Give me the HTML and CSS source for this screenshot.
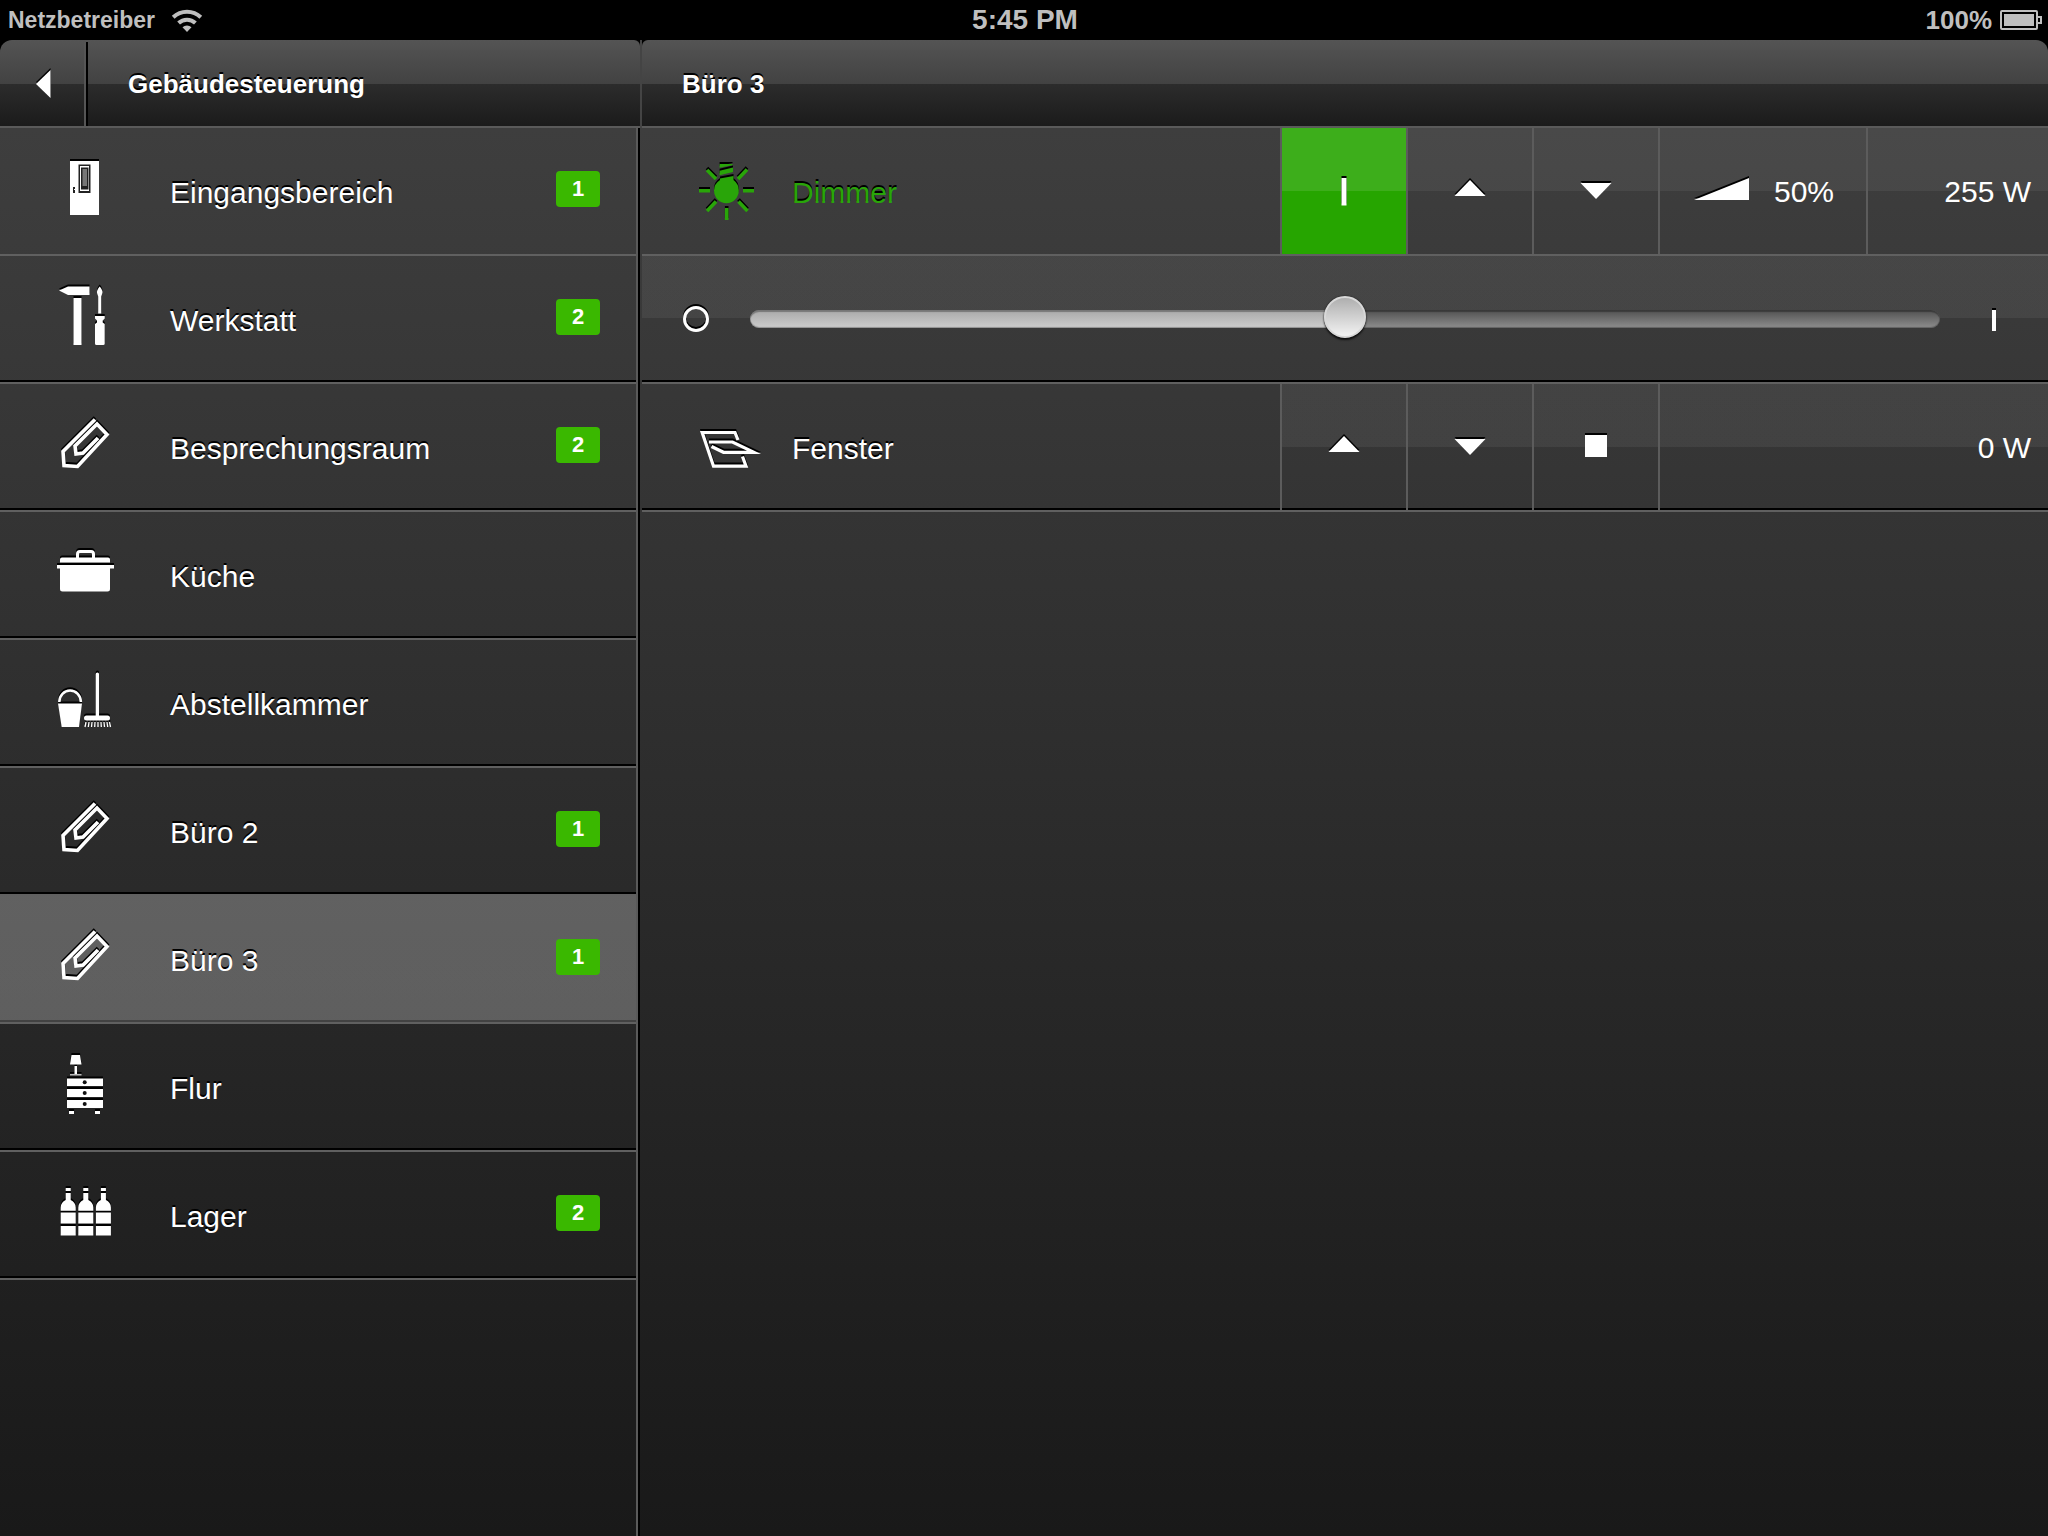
FILE: index.html
```html
<!DOCTYPE html>
<html lang="de">
<head>
<meta charset="utf-8">
<meta name="viewport" content="width=device-width, initial-scale=1">
<title>Gebäudesteuerung</title>
<link rel="stylesheet" href="styles.css">
</head>
<body>
<svg class="sprite" aria-hidden="true">
  <symbol id="clip" viewBox="0 0 72 72">
    <path fill="none" stroke="currentColor" stroke-width="3.600" d="M46 8.500 14 40.500 15 54.500 28.500 55.500 58 23.500 48 13 26 35 27 43 34 42 49 27"/>
  </symbol>
  <symbol id="up" viewBox="0 0 48 48"><path fill="currentColor" d="M8.500 29 24 13 39.500 29z"/></symbol>
  <symbol id="down" viewBox="0 0 48 48"><path fill="currentColor" d="M8.500 16h31L24 32z"/></symbol>
</svg>

<div class="status">
  <div class="status-left">
    <span>Netzbetreiber</span>
    <svg width="32" height="24" viewBox="0 0 32 24" aria-hidden="true">
      <g fill="none" stroke="currentColor" stroke-width="4">
        <path d="M2.200 9.200a20 20 0 0 1 27.600 0"/>
        <path d="M7.600 15a12.200 12.200 0 0 1 16.800 0"/>
      </g>
      <path fill="currentColor" d="M11.500 19.300a6.500 6.500 0 0 1 9 0L16 24z"/>
    </svg>
  </div>
  <time class="status-time">5:45 PM</time>
  <div class="status-right">
    <span>100%</span>
    <svg width="42" height="20" viewBox="0 0 42 20" aria-hidden="true">
      <rect x="1" y="1" width="36" height="18" rx="1" fill="none" stroke="currentColor" stroke-width="2"/>
      <path fill="currentColor" d="M4 4h30v12H4z"/>
      <path fill="none" stroke="currentColor" stroke-width="2" d="M38 7h3v6h-3"/>
    </svg>
  </div>
</div>

<div class="split">
  <aside class="sidebar">
    <div class="bar-frame">
      <header class="bar bar-left">
        <button class="back" type="button" aria-label="Zurück">
          <svg width="16" height="28" viewBox="0 0 16 28"><path fill="currentColor" d="M1 14 15.500 0v28z"/></svg>
        </button>
        <h1 class="bar-title">Gebäudesteuerung</h1>
      </header>
    </div>
    <nav class="rooms" aria-label="Räume">
      <ul class="room-list">
        <li><a class="room" href="#eingang">
          <svg class="icon" viewBox="0 0 72 72">
            <path fill="#fff" d="M21 6h29v54H21z"/>
            <path fill="#222" d="M29.500 9.500h12V38h-12z"/>
            <path fill="#fff" d="M31 11h9v25h-9z"/>
            <path fill="#222" d="M32 12.500h7.500v22H32z"/>
            <path fill="#777" d="M33.500 14h4.500v17h-4.500z"/>
            <path fill="#222" d="M24 32h2v2h-1v1h1v3h-2z"/>
          </svg>
          <span class="name">Eingangsbereich</span><span class="badge">1</span></a></li>
        <li><a class="room" href="#werkstatt">
          <svg class="icon" viewBox="0 0 72 72">
            <path fill="#fff" d="M10 7.500 19 3.500h21.500V12H19zM24.500 15h8v47h-8z"/>
            <path fill="#fff" d="M50.700 3.500c2 2.500 3.500 5 2.500 7l-1 3v17h-3v-17l-1-3c-1-2 .5-4.500 2.500-7zM46 33h9.700v2.500l-2 2v2l2 1.500v19.500q0 1.500-1.500 1.500h-6.700q-1.500 0-1.500-1.500V41l2-1.500v-2l-2-2z"/>
          </svg>
          <span class="name">Werkstatt</span><span class="badge">2</span></a></li>
        <li><a class="room" href="#besprechung">
          <svg class="icon"><use href="#clip"/></svg>
          <span class="name">Besprechungsraum</span><span class="badge">2</span></a></li>
        <li><a class="room" href="#kueche">
          <svg class="icon" viewBox="0 0 72 72">
            <path fill="none" stroke="#fff" stroke-width="3" d="M28.500 19v-4q0-2.500 2.500-2.500h11q2.500 0 2.500 2.500v4"/>
            <path fill="#fff" d="M11 23.500v-3q0-2 2-2h46q2 0 2 2v3zM8 26h57v3.500h-4V50q0 2.500-2.500 2.500h-45Q11 52.500 11 50V29.500H8z"/>
          </svg>
          <span class="name">Küche</span></a></li>
        <li><a class="room" href="#abstellkammer">
          <svg class="icon" viewBox="0 0 72 72">
            <path fill="none" stroke="#fff" stroke-width="2.500" d="M10.300 35a10.800 11.500 0 0 1 21.600 0"/>
            <path fill="#fff" d="M9 36.500h24L30 60H12.700z"/>
            <path fill="#fff" d="M46.700 7q0-1.500 1.700-1.500T50 7v41.500h8.500q2.500 0 2.500 2.500t-2.500 2.500h-21q-2.500 0-2.500-2.500t2.500-2.500h9.200z"/>
            <path stroke="#fff" stroke-width="1.300" d="m37 55-1 5m4-5-.7 5m3.700-5-.5 5m3.500-5-.3 5m3.300-5v5m3-5 .3 5m2.700-5 .5 5m2.500-5 .7 5m1.800-5 1 5"/>
          </svg>
          <span class="name">Abstellkammer</span></a></li>
        <li><a class="room" href="#buero2">
          <svg class="icon"><use href="#clip"/></svg>
          <span class="name">Büro 2</span><span class="badge">1</span></a></li>
        <li><a class="room room-current" href="#buero3" aria-current="page">
          <svg class="icon"><use href="#clip"/></svg>
          <span class="name">Büro 3</span><span class="badge">1</span></a></li>
        <li><a class="room" href="#flur">
          <svg class="icon" viewBox="0 0 72 72">
            <path fill="#fff" d="M22.500 4H31l1.500 9.500H21zM25.500 15H28v8h-2.500z"/>
            <path fill="#bbb" d="M21 23h11.500v1.500H21z"/>
            <path fill="#fff" d="M18 27.500h36V35H18zM18 38h36v8H18zM18 49h36v8H18zM20 60h5v3h-5zM46 60h5v3h-5z"/>
            <g fill="#111"><circle cx="35.700" cy="31.300" r="2"/><circle cx="35.700" cy="42" r="2"/><circle cx="35.700" cy="53" r="2"/></g>
          </svg>
          <span class="name">Flur</span></a></li>
        <li><a class="room" href="#lager">
          <svg class="icon" viewBox="0 0 72 72">
            <g fill="#fff">
              <path id="bottle" d="M16.700 9h5v3h-5zM16.700 14h5v7c3 1.500 5 4 5 7.500v3.200h-15v-3.200c0-3.500 2-6 5-7.500zM11.700 33.500h15v11h-15zM11.700 47h15v9.500h-15z"/>
              <use href="#bottle" x="17.600"/><use href="#bottle" x="35.200"/>
            </g>
          </svg>
          <span class="name">Lager</span><span class="badge">2</span></a></li>
      </ul>
    </nav>
  </aside>

  <main class="detail">
    <div class="bar-frame bar-frame-right">
      <header class="bar bar-right"><h2 class="bar-title">Büro 3</h2></header>
    </div>
    <div class="devices">
      <section class="device">
        <div class="device-label device-on">
          <svg class="icon" viewBox="0 0 72 72">
            <g fill="none" stroke="currentColor" stroke-width="3.600">
              <path d="M9 35.700h11M53 35.700h11M36.700 53v12M17 56l9-9.500M48.500 46.500l9 9.500M17 15l9 9M48 24l9-9.500"/>
            </g>
            <path fill="currentColor" d="M30 23.500 43.500 21v4q5.300 4 5.300 10.500a12.400 12.700 0 0 1-24.800 0q0-6.500 6-10.500zM29.600 9H42l1 1-13.400 2.700zM29.600 15.700 43 12.500v4.500l-13.400 3.200z"/>
          </svg>
          <span class="name">Dimmer</span>
        </div>
        <button class="control control-on" type="button" aria-label="Ein" aria-pressed="true">
          <svg class="glyph" viewBox="0 0 48 48"><path fill="currentColor" d="M21.500 11h5v27.500h-5z"/></svg>
        </button>
        <button class="control" type="button" aria-label="Heller"><svg class="glyph"><use href="#up"/></svg></button>
        <button class="control" type="button" aria-label="Dunkler"><svg class="glyph"><use href="#down"/></svg></button>
        <div class="level">
          <svg class="ramp" viewBox="0 0 56 48" aria-hidden="true"><path fill="currentColor" d="M0 33 55 11v22z"/></svg>
          <output class="reading" for="helligkeit">50%</output>
        </div>
        <div class="power"><span class="reading">255 W</span></div>
      </section>
      <section class="dimmer">
        <svg class="end" viewBox="0 0 28 28" aria-hidden="true"><circle cx="14" cy="14" r="11.500" fill="none" stroke="currentColor" stroke-width="3"/></svg>
        <input class="slider" id="helligkeit" type="range" min="0" max="100" value="50" aria-label="Helligkeit" style="--level: 50%">
        <svg class="end" viewBox="0 0 28 28" aria-hidden="true"><path fill="currentColor" d="M12 5h4v21h-4z"/></svg>
      </section>
      <section class="device ruled">
        <div class="device-label">
          <svg class="icon" viewBox="0 0 72 72">
            <g fill="none" stroke="currentColor" stroke-width="3.200" stroke-miterlimit="8">
              <path d="M48 29 45 21.500H12.200L23.500 55.200H56L52.500 45.500"/>
              <path d="M19 31H42.500L64 41.300H33.500L21.500 35.500"/>
            </g>
          </svg>
          <span class="name">Fenster</span>
        </div>
        <button class="control" type="button" aria-label="Öffnen"><svg class="glyph"><use href="#up"/></svg></button>
        <button class="control" type="button" aria-label="Schließen"><svg class="glyph"><use href="#down"/></svg></button>
        <button class="control" type="button" aria-label="Stopp">
          <svg class="glyph" viewBox="0 0 48 48"><path fill="currentColor" d="M13 12h22v22H13z"/></svg>
        </button>
        <div class="power power-wide"><span class="reading">0 W</span></div>
      </section>
    </div>
  </main>
</div>
</body>
</html>
```

FILE: styles.css
```css
* {
  box-sizing: border-box;
}

body {
  margin: 0;
  min-height: 100vh;
  display: flex;
  flex-direction: column;
  background: #000;
  color: #fff;
  font: 30px/34px "Liberation Sans", Arial, sans-serif;
}

button {
  margin: 0;
  padding: 0;
  border: 0;
  background: none;
  color: inherit;
  font: inherit;
}

svg {
  display: block;
  flex: none;
}

.sprite {
  position: absolute;
  width: 0;
  height: 0;
}

/* Status bar */
.status {
  display: grid;
  grid-template-columns: 1fr auto 1fr;
  align-items: center;
  height: 40px;
  padding: 0 6px 0 8px;
  color: #bfbfbf;
  font-weight: bold;
}

.status-left,
.status-right {
  display: flex;
  align-items: center;
}

.status-left {
  gap: 16px;
  font-size: 23px;
}

.status-right {
  justify-content: flex-end;
  gap: 8px;
  font-size: 26px;
}

.status-time {
  font-size: 28px;
}

/* Two panes */
.split {
  flex: 1;
  display: grid;
  grid-template-columns: 640px 1fr;
  background: linear-gradient(#3e3e3e 88px, #191919);
}

.sidebar,
.detail {
  display: flex;
  flex-direction: column;
  min-width: 0;
}

.bar-frame {
  background: #000;
}

.bar-frame-right {
  border-left: 2px solid #444;
}

.bar {
  display: flex;
  align-items: center;
  height: 88px;
  border-bottom: 2px solid #5a5a5a;
  background: linear-gradient(#545454, #424242 44px, #2c2c2c 44px, #1b1b1b);
}

.bar-left {
  border-radius: 12px 6px 0 0;
}

.bar-right {
  border-radius: 6px 12px 0 0;
}

.bar-title {
  margin: 0;
  padding: 2px 40px 0;
  font-size: 26px;
  font-weight: bold;
  text-shadow: 0 -2px 0 #000;
}

.back {
  display: flex;
  align-items: center;
  justify-content: center;
  align-self: stretch;
  width: 88px;
  margin-top: 2px;
  border-right: 2px solid #000;
  box-shadow: inset -2px 0 0 #555;
}

.back svg,
.icon,
.glyph,
.ramp,
.end {
  filter: drop-shadow(0 -2px 0 #000);
}

/* Room list */
.rooms {
  flex: 1;
  display: flex;
  border-right: 2px solid #000;
}

.room-list {
  flex: 1;
  margin: 0;
  padding: 0;
  list-style: none;
  border-right: 2px solid #5a5a5a;
}

.room {
  display: flex;
  align-items: center;
  height: 128px;
  padding: 0 36px 0 49px;
  border-bottom: 2px solid #606060;
  color: #fff;
  text-decoration: none;
}

li + li .room,
.ruled,
.dimmer {
  background: linear-gradient(#000, #000) bottom / 100% 2px no-repeat padding-box;
}

li + li .room-current {
  background:
    linear-gradient(rgba(255, 255, 255, 0.26), rgba(255, 255, 255, 0.26)) padding-box,
    linear-gradient(#000, #000) bottom / 100% 2px no-repeat padding-box;
}

.icon {
  width: 72px;
  height: 72px;
}

.name {
  flex: 1;
  padding-top: 4px;
  text-shadow: 0 -2px 0 #000;
}

.room .name {
  padding-left: 49px;
}

.badge {
  width: 44px;
  height: 36px;
  margin-bottom: 4px;
  border-radius: 4px;
  background: #3ab800;
  font-size: 22px;
  font-weight: bold;
  line-height: 36px;
  text-align: center;
}

/* Devices */
.devices {
  padding-left: 2px;
}

.device,
.dimmer {
  display: flex;
  height: 128px;
  border-bottom: 2px solid #606060;
}

.device-label {
  flex: 1;
  display: flex;
  align-items: center;
  padding-left: 48px;
}

.device-label .name {
  padding-left: 30px;
}

.device-on {
  color: #29a509;
}

.control,
.level,
.power {
  display: flex;
  align-items: center;
  border-left: 2px solid #5c5c5c;
  background: linear-gradient(rgba(255, 255, 255, 0.06), rgba(255, 255, 255, 0.06)) top / 100% 63px no-repeat padding-box;
}

.control {
  justify-content: center;
  width: 126px;
}

.control-on {
  background: linear-gradient(#3dae1b 63px, #26a500 63px) padding-box;
}

.glyph {
  width: 48px;
  height: 48px;
}

.level {
  gap: 24px;
  width: 208px;
  padding-left: 34px;
}

.ramp {
  width: 56px;
  height: 48px;
}

.reading {
  padding-top: 2px;
}

.power {
  justify-content: flex-end;
  width: 182px;
  padding-right: 17px;
}

.power-wide {
  width: 390px;
}

/* Dimmer slider */
.dimmer {
  align-items: center;
  gap: 40px;
  padding: 0 40px;
  background:
    linear-gradient(#000, #000) bottom / 100% 2px no-repeat padding-box,
    linear-gradient(rgba(255, 255, 255, 0.06), rgba(255, 255, 255, 0.06)) top / 100% 62px no-repeat;
}

.end {
  width: 28px;
  height: 28px;
}

.slider {
  -webkit-appearance: none;
  appearance: none;
  flex: 1;
  min-width: 0;
  height: 44px;
  margin: 0;
  background: none;
}

.slider::-webkit-slider-runnable-track {
  height: 18px;
  border-radius: 9px;
  background:
    linear-gradient(#a8a8a8, #cdcdcd) left / var(--level) 100% no-repeat,
    linear-gradient(#505050, #8e8e8e);
  box-shadow: inset 0 2px 1px rgba(0, 0, 0, 0.3), inset 0 -1px 1px rgba(0, 0, 0, 0.3);
}

.slider::-webkit-slider-thumb {
  -webkit-appearance: none;
  width: 42px;
  height: 42px;
  margin-top: -14px;
  border: 2px solid #d8d8d8;
  border-radius: 50%;
  background: linear-gradient(#ababab, #f6f6f6) border-box;
  box-shadow: 0 2px 2px rgba(0, 0, 0, 0.7), 0 0 2px rgba(0, 0, 0, 0.6);
}
```
